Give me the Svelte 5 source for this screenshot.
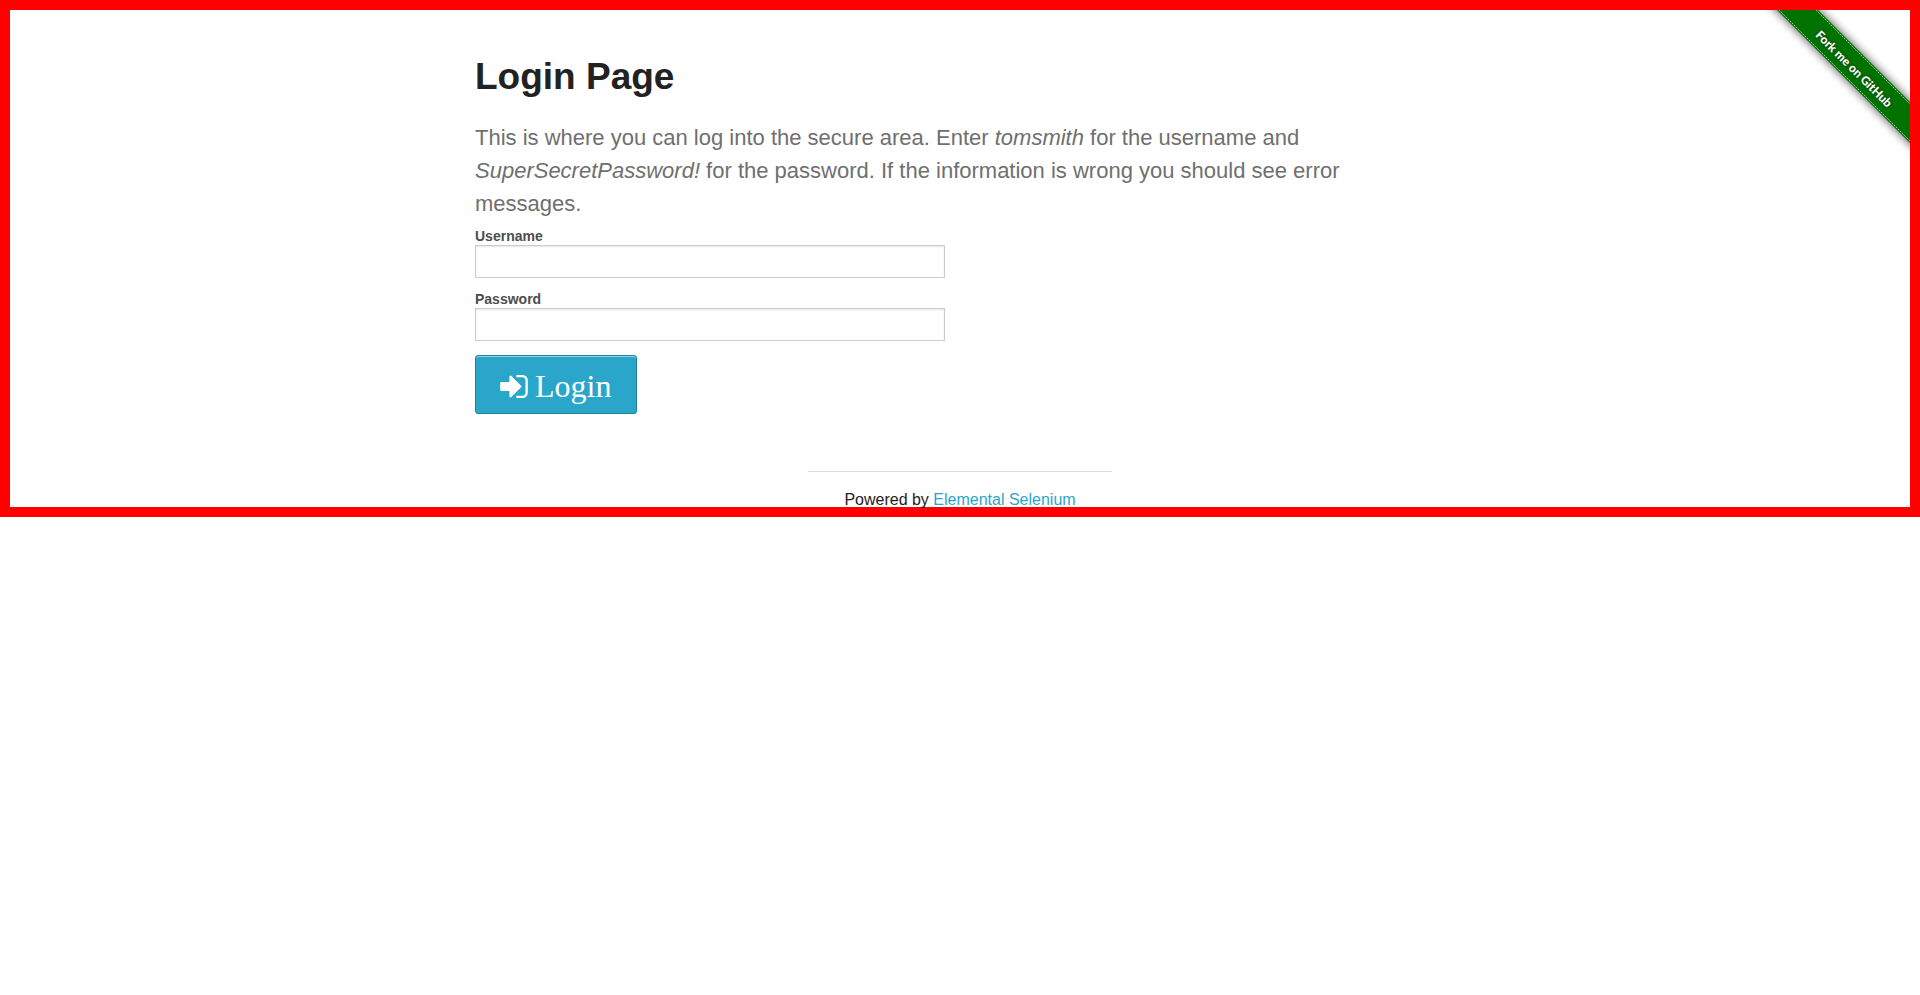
<script>
  let username = $state('');
  let password = $state('');
</script>

<div class="page">
  <a class="ribbon" href="#github" aria-label="Fork me on GitHub">
    <svg width="149" height="149" viewBox="0 0 149 149">
      <defs>
        <filter id="band-shadow" x="-20%" y="-20%" width="140%" height="140%">
          <feGaussianBlur stdDeviation="4" />
        </filter>
      </defs>
      <path d="M-16 -30L29 -30L189 130L189 175Z" fill="#000" opacity="0.55" filter="url(#band-shadow)" />
      <path d="M6 -10L47 -10L159 102L159 143Z" fill="#007200" />
      <path d="M16 -2L152 134" class="stitch" />
      <path d="M53 -2L152 97" class="stitch" />
      <text x="90" y="62" transform="rotate(45 90 62)">Fork me on GitHub</text>
    </svg>
  </a>

  <main>
    <h1>Login Page</h1>
    <p>
      This is where you can log into the secure area. Enter <em>tomsmith</em> for the username and
      <em>SuperSecretPassword!</em> for the password. If the information is wrong you should see error
      messages.
    </p>
    <form onsubmit={(e) => e.preventDefault()}>
      <div class="field">
        <label for="username">Username</label>
        <input id="username" type="text" bind:value={username} />
      </div>
      <div class="field">
        <label for="password">Password</label>
        <input id="password" type="password" bind:value={password} />
      </div>
      <button type="submit">
        <svg width="28" height="23" viewBox="128 256 1536 1280" aria-hidden="true">
          <path fill="currentColor" d="M1312 896q0 26-19 45l-544 544q-19 19-45 19t-45-19-19-45v-288h-448q-26 0-45-19t-19-45v-384q0-26 19-45t45-19h448v-288q0-26 19-45t45-19 45 19l544 544q19 19 19 45zm352-352v704q0 119-84.5 203.5t-203.5 84.5h-320q-13 0-22.5-9.5t-9.5-22.5q0-4-1-20t-.5-26.5 3-23.5 10-19.5 20.5-6.5h320q66 0 113-47t47-113v-704q0-66-47-113t-113-47h-312l-11.5-1-11.5-3-8-5.5-7-9-2-13.5q0-4-1-20t-.5-26.5 3-23.5 10-19.5 20.5-6.5h320q119 0 203.5 84.5t84.5 203.5z" />
        </svg>
        <span>Login</span>
      </button>
    </form>
  </main>

  <footer>
    <hr />
    <div class="credit">Powered by <a href="#elemental">Elemental Selenium</a></div>
  </footer>
</div>

<style>
  :global(body) {
    margin: 0;
    background: #fff;
  }

  .page {
    position: relative;
    display: flex;
    flex-direction: column;
    align-items: center;
    border: 10px solid #f00;
    font-family: "Liberation Sans", Arial, sans-serif;
    font-size: 16px;
    line-height: 24px;
    color: #222;
  }

  .ribbon {
    position: absolute;
    top: 0;
    right: 0;
  }

  .ribbon svg {
    display: block;
    overflow: hidden;
  }

  .stitch {
    fill: none;
    stroke: #9ad29a;
    stroke-width: 1;
    stroke-dasharray: 2 1;
  }

  .ribbon text {
    font-family: Lato, sans-serif;
    font-size: 12px;
    font-weight: 900;
    fill: #fff;
    text-anchor: middle;
    text-shadow: 0 0 3px rgba(0, 0, 0, 0.6);
  }

  main {
    box-sizing: border-box;
    width: 100%;
    max-width: 1000px;
    padding: 41px 15px 0;
  }

  h1 {
    margin: 0 0 18px;
    font-size: 37px;
    line-height: 52px;
    font-weight: 700;
  }

  p {
    margin: 0 0 7px;
    font-size: 22px;
    line-height: 33px;
    color: #6f6f6f;
  }

  form {
    display: flex;
    flex-direction: column;
    align-items: flex-start;
  }

  .field {
    width: calc(50% - 15px);
    margin-bottom: 12px;
  }

  .field label {
    display: block;
    font-size: 14px;
    line-height: 18px;
    font-weight: 700;
    color: #4d4d4d;
  }

  .field input {
    display: block;
    box-sizing: border-box;
    width: 100%;
    height: 33px;
    padding: 8px;
    border: 1px solid #ccc;
    border-radius: 0;
    background: #fff;
    box-shadow: inset 0 1px 2px rgba(0, 0, 0, 0.1);
    font: inherit;
    font-size: 14px;
    color: rgba(0, 0, 0, 0.75);
  }

  button {
    display: flex;
    align-items: center;
    gap: 7px;
    margin: 2px 0 0;
    padding: 12px 25px 9px 24px;
    border: 1px solid #1e83a1;
    border-radius: 3px;
    background: #2ba6cb;
    box-shadow: inset 0 1px 0 rgba(255, 255, 255, 0.5);
    font-family: "Liberation Serif", "Times New Roman", serif;
    font-size: 32px;
    line-height: 36px;
    color: #fff;
    cursor: pointer;
  }

  footer {
    width: 304px;
    margin: 57px 0 -5px;
    text-align: center;
  }

  hr {
    margin: 0 0 16px;
    border: 0;
    border-top: 1px solid #ddd;
  }

  .credit a {
    color: #2ba6cb;
    text-decoration: none;
  }
</style>
